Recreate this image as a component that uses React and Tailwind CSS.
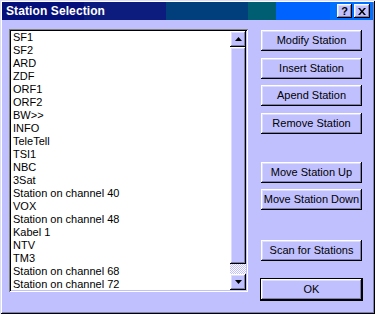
import React from 'react';

const stations = [
  'SF1',
  'SF2',
  'ARD',
  'ZDF',
  'ORF1',
  'ORF2',
  'BW>>',
  'INFO',
  'TeleTell',
  'TSI1',
  'NBC',
  '3Sat',
  'Station on channel 40',
  'VOX',
  'Station on channel 48',
  'Kabel 1',
  'NTV',
  'TM3',
  'Station on channel 68',
  'Station on channel 72',
];

// raised win98 bevel, lilac scheme
const raised =
  'bg-[#c0c0ff] shadow-[inset_-1px_-1px_#000,inset_1px_1px_#fff,inset_-2px_-2px_#8080b0,inset_2px_2px_#dcdcff]';

const Button = ({ label, className = '' }) => (
  <button
    type="button"
    className={`${raised} w-[101px] h-[21px] flex items-center justify-center text-[11px] text-black leading-none ${className}`}
  >
    {label}
  </button>
);

const Arrow = ({ down = false }) => (
  <svg width="7" height="4" viewBox="0 0 7 4" className="block">
    {down ? (
      <polygon points="0,0 7,0 3.5,4" fill="#000" />
    ) : (
      <polygon points="3.5,0 7,4 0,4" fill="#000" />
    )}
  </svg>
);

const TitleBar = () => (
  <div className="h-[18px] flex items-center pl-[4px] pr-[3px] bg-[linear-gradient(to_right,#06107a_0,#06107a_82px,#0c1c7e_82px,#0c1c7e_164px,#003e7c_164px,#003e7c_246px,#005e72_246px,#005e72_274px,#0062ff_274px,#0062ff_328px,#0070ff_328px)]">
    <span className="text-white font-bold text-[12px] tracking-[0.1px]">
      Station Selection
    </span>
    <div className="ml-auto flex gap-[2px]">
      <div className={`${raised} w-[15px] h-[14px] flex items-center justify-center`}>
        <span className="font-bold text-[11px] leading-none text-black">?</span>
      </div>
      <div className={`${raised} w-[16px] h-[14px] flex items-center justify-center`}>
        <svg width="8" height="7" viewBox="0 0 8 7">
          <path d="M0 0h2l2 2.5 2-2.5h2l-3 3.5 3 3.5h-2l-2-2.5-2 2.5h-2l3-3.5z" fill="#000" />
        </svg>
      </div>
    </div>
  </div>
);

const ListBox = () => (
  <div className="w-[239px] h-[263px] p-[2px] bg-white shadow-[inset_1px_1px_#808080,inset_-1px_-1px_#fff,inset_2px_2px_#000,inset_-2px_-2px_#c0c0ff] flex">
    <ul className="flex-1 pl-[2px] pt-[0px] text-[11px] leading-[13px] text-black overflow-hidden">
      {stations.map((s) => (
        <li key={s} className="whitespace-nowrap">
          {s}
        </li>
      ))}
    </ul>
    <div className="w-[16px] flex flex-col">
      <div className={`${raised} h-[16px] flex items-center justify-center`}>
        <Arrow />
      </div>
      <div className={`${raised} h-[217px]`} />
      <div className="flex-1 bg-[repeating-conic-gradient(#ffffff_0%_25%,#c0c0ff_0%_50%)] bg-[length:2px_2px]" />
      <div className={`${raised} h-[16px] flex items-center justify-center`}>
        <Arrow down />
      </div>
    </div>
  </div>
);

export default function App() {
  return (
    <div className="w-[375px] h-[314px] bg-[#c0c0ff] p-[2px] shadow-[inset_1px_1px_#dcdcff,inset_-1px_-1px_#000,inset_2px_2px_#fff,inset_-2px_-2px_#8080b0] font-['Liberation_Sans',Arial,sans-serif] flex flex-col">
      <TitleBar />
      <div className="flex mt-[9px] ml-[7px]">
        <ListBox />
        <div className="ml-[13px] flex flex-col">
          <Button label="Modify Station" className="mt-[1px]" />
          <Button label="Insert Station" className="mt-[7px]" />
          <Button label="Apend Station" className="mt-[6px]" />
          <Button label="Remove Station" className="mt-[7px]" />
          <Button label="Move Station Up" className="mt-[28px]" />
          <Button label="Move Station Down" className="mt-[6px]" />
          <Button label="Scan for Stations" className="mt-[30px]" />
          <div className="mt-[17px] -ml-[1px] border border-black w-[103px]">
            <Button label="OK" />
          </div>
        </div>
      </div>
    </div>
  );
}
